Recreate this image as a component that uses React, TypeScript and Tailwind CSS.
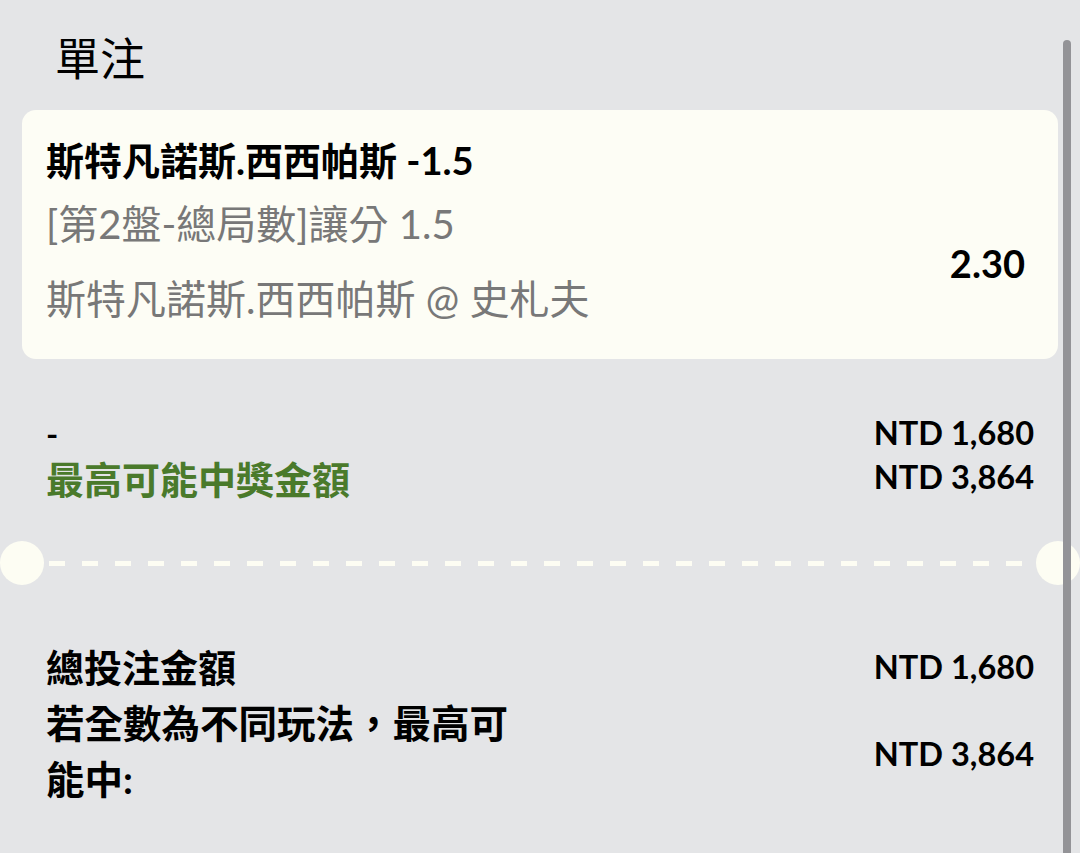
import React from "react";

const font = { fontFamily: 'Lato, "Noto Sans CJK TC", "Noto Sans", sans-serif' };

export default function App() {
  return (
    <div
      className="relative w-[1080px] h-[853px] overflow-hidden bg-[#e4e5e7] text-black"
      style={font}
    >
      {/* Header */}
      <div className="h-[110px] pl-[55px] pt-[27px]">
        <div className="text-[45px] leading-[60px] font-normal" style={{ fontFamily: '"Noto Sans CJK TC", sans-serif' }}>
          單注
        </div>
      </div>

      {/* Bet card */}
      <div className="mx-[22px] h-[249px] rounded-[14px] bg-[#fdfdf5] pl-[24px] pr-[33px] flex items-stretch justify-between">
        <div className="pt-[17px]">
          <div className="text-[38px] leading-[66px] font-bold text-black">
            斯特凡諾斯.西西帕斯 -1.5
          </div>
          <div className="-mt-[2px] text-[40px] leading-[66px] text-[#787878]">
            [第2盤-總局數]讓分 1.5
          </div>
          <div className="mt-[9px] text-[40px] leading-[66px] text-[#787878]">
            斯特凡諾斯.西西帕斯 @ 史札夫
          </div>
        </div>
        <div className="pt-[131px] text-[38px] leading-[44px] font-bold text-black">2.30</div>
      </div>

      {/* Potential win */}
      <div className="px-[46px] pt-[52px] flex justify-between">
        <div className="flex flex-col">
          <div className="text-[33px] leading-[44px] font-bold">-</div>
          <div className="text-[38px] leading-[48px] font-bold text-[#4a7a2b]">最高可能中獎金額</div>
        </div>
        <div className="flex flex-col items-end">
          <div className="text-[32.5px] leading-[44px] font-bold">NTD 1,680</div>
          <div className="text-[32.5px] leading-[44px] font-bold">NTD 3,864</div>
        </div>
      </div>

      {/* Divider */}
      <div className="mt-[38px] flex items-center h-[44px]">
        <div className="w-[44px] h-[44px] rounded-full bg-[#fdfdf3] shrink-0" />
        <div className="flex-1 mx-[5px] h-[5px] bg-[repeating-linear-gradient(90deg,#fdfdf3_0px,#fdfdf3_16px,transparent_16px,transparent_33px)]" />
        <div className="w-[44px] h-[44px] rounded-full bg-[#fdfdf3] shrink-0" />
      </div>

      {/* Totals */}
      <div className="px-[46px] pt-[54px] flex justify-between">
        <div className="flex flex-col">
          <div className="text-[38px] leading-[56px] font-bold">總投注金額</div>
          <div className="w-[480px] text-[38.5px] leading-[56px] font-bold">若全數為不同玩法，最高可能中:</div>
        </div>
        <div className="flex flex-col items-end">
          <div className="text-[32.5px] leading-[56px] font-bold">NTD 1,680</div>
          <div className="mt-[31px] text-[32.5px] leading-[56px] font-bold">NTD 3,864</div>
        </div>
      </div>

      {/* Scrollbar */}
      <div className="absolute left-[1063px] top-[40px] w-[8px] h-[830px] rounded-full bg-[#939397]" />
    </div>
  );
}
